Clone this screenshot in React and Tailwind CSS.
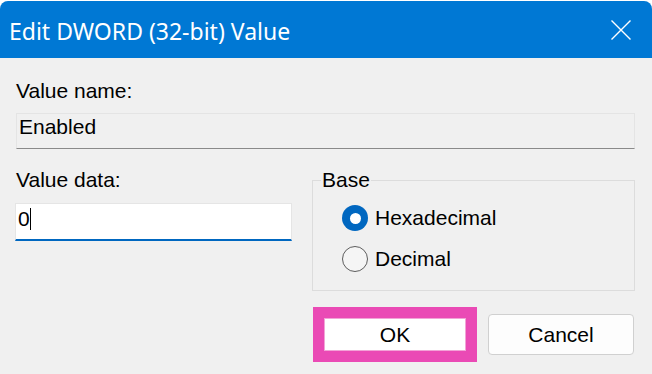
export default function App() {
  return (
    <div className="h-[374px] w-[652px] bg-white pt-px font-['Liberation_Sans',Arial,sans-serif] text-[21px] leading-6 text-black">
      <div className="flex h-[373px] flex-col overflow-hidden rounded-t-[8px] bg-[#f0f0f0]">
        {/* Title bar */}
        <div className="flex h-[57px] shrink-0 items-center justify-between bg-[#0078d4] pl-[9px] pr-[21px] text-white">
          <span className="mt-[2px] font-['Noto_Sans',sans-serif] text-[23px] leading-7">
            Edit DWORD (32-bit) Value
          </span>
          <svg width="20" height="20" viewBox="0 0 20 20" className="mt-px">
            <path d="M0.5 0.5 L19.5 19.5 M19.5 0.5 L0.5 19.5" stroke="#fff" strokeWidth="1.4" fill="none" />
          </svg>
        </div>

        {/* Body */}
        <div className="flex flex-1 flex-col pl-4 pr-[17px]">
          <div className="mt-[21px]">Value name:</div>
          <div className="mt-[10px] flex h-[36px] items-start border border-[#e4e4e4] border-b-[#8a8a8a] bg-[#f0f0f0] pl-[2px] pt-px">
            Enabled
          </div>

          <div className="mt-[19px] flex items-start">
            <div className="flex w-[276px] flex-col">
              <div>Value data:</div>
              <div className="-ml-px mt-[11px] flex h-[38px] items-start border border-[#e5e5e5] border-b-2 border-b-[#0067c0] bg-white pl-[2px] pt-[3px]">
                <span>0</span>
                <span className="mt-px inline-block h-[22px] w-px bg-black" />
              </div>
            </div>

            <fieldset className="ml-auto w-[323px] border border-[#dcdcdc] p-0 pb-[18px]">
              <legend className="ml-[8px] px-px">Base</legend>
              <div className="flex flex-col gap-[15px] pl-[29px] pt-[13px]">
                <div className="flex h-[26px] items-center gap-[7px]">
                  <span className="flex h-[26px] w-[26px] items-center justify-center rounded-full bg-[#0067c0]">
                    <span className="h-[11px] w-[11px] rounded-full bg-white" />
                  </span>
                  <span>Hexadecimal</span>
                </div>
                <div className="flex h-[26px] items-center gap-[7px]">
                  <span className="h-[26px] w-[26px] rounded-full border-[1.5px] border-[#5d5d5d] bg-[#f5f5f5]" />
                  <span>Decimal</span>
                </div>
              </div>
            </fieldset>
          </div>

          {/* Buttons */}
          <div className="mt-[16px] flex items-center justify-end gap-[11px]">
            <div className="h-[55px] w-[164px] border-[11px] border-[#ea4ab5]">
              <div className="flex h-full w-full items-center justify-center border border-[#f2a4d7] bg-white">
                OK
              </div>
            </div>
            <button className="mr-px flex h-[41px] w-[146px] items-center justify-center rounded-[4px] border border-[#d0d0d0] bg-[#fdfdfd]">
              Cancel
            </button>
          </div>
        </div>
      </div>
    </div>
  );
}
